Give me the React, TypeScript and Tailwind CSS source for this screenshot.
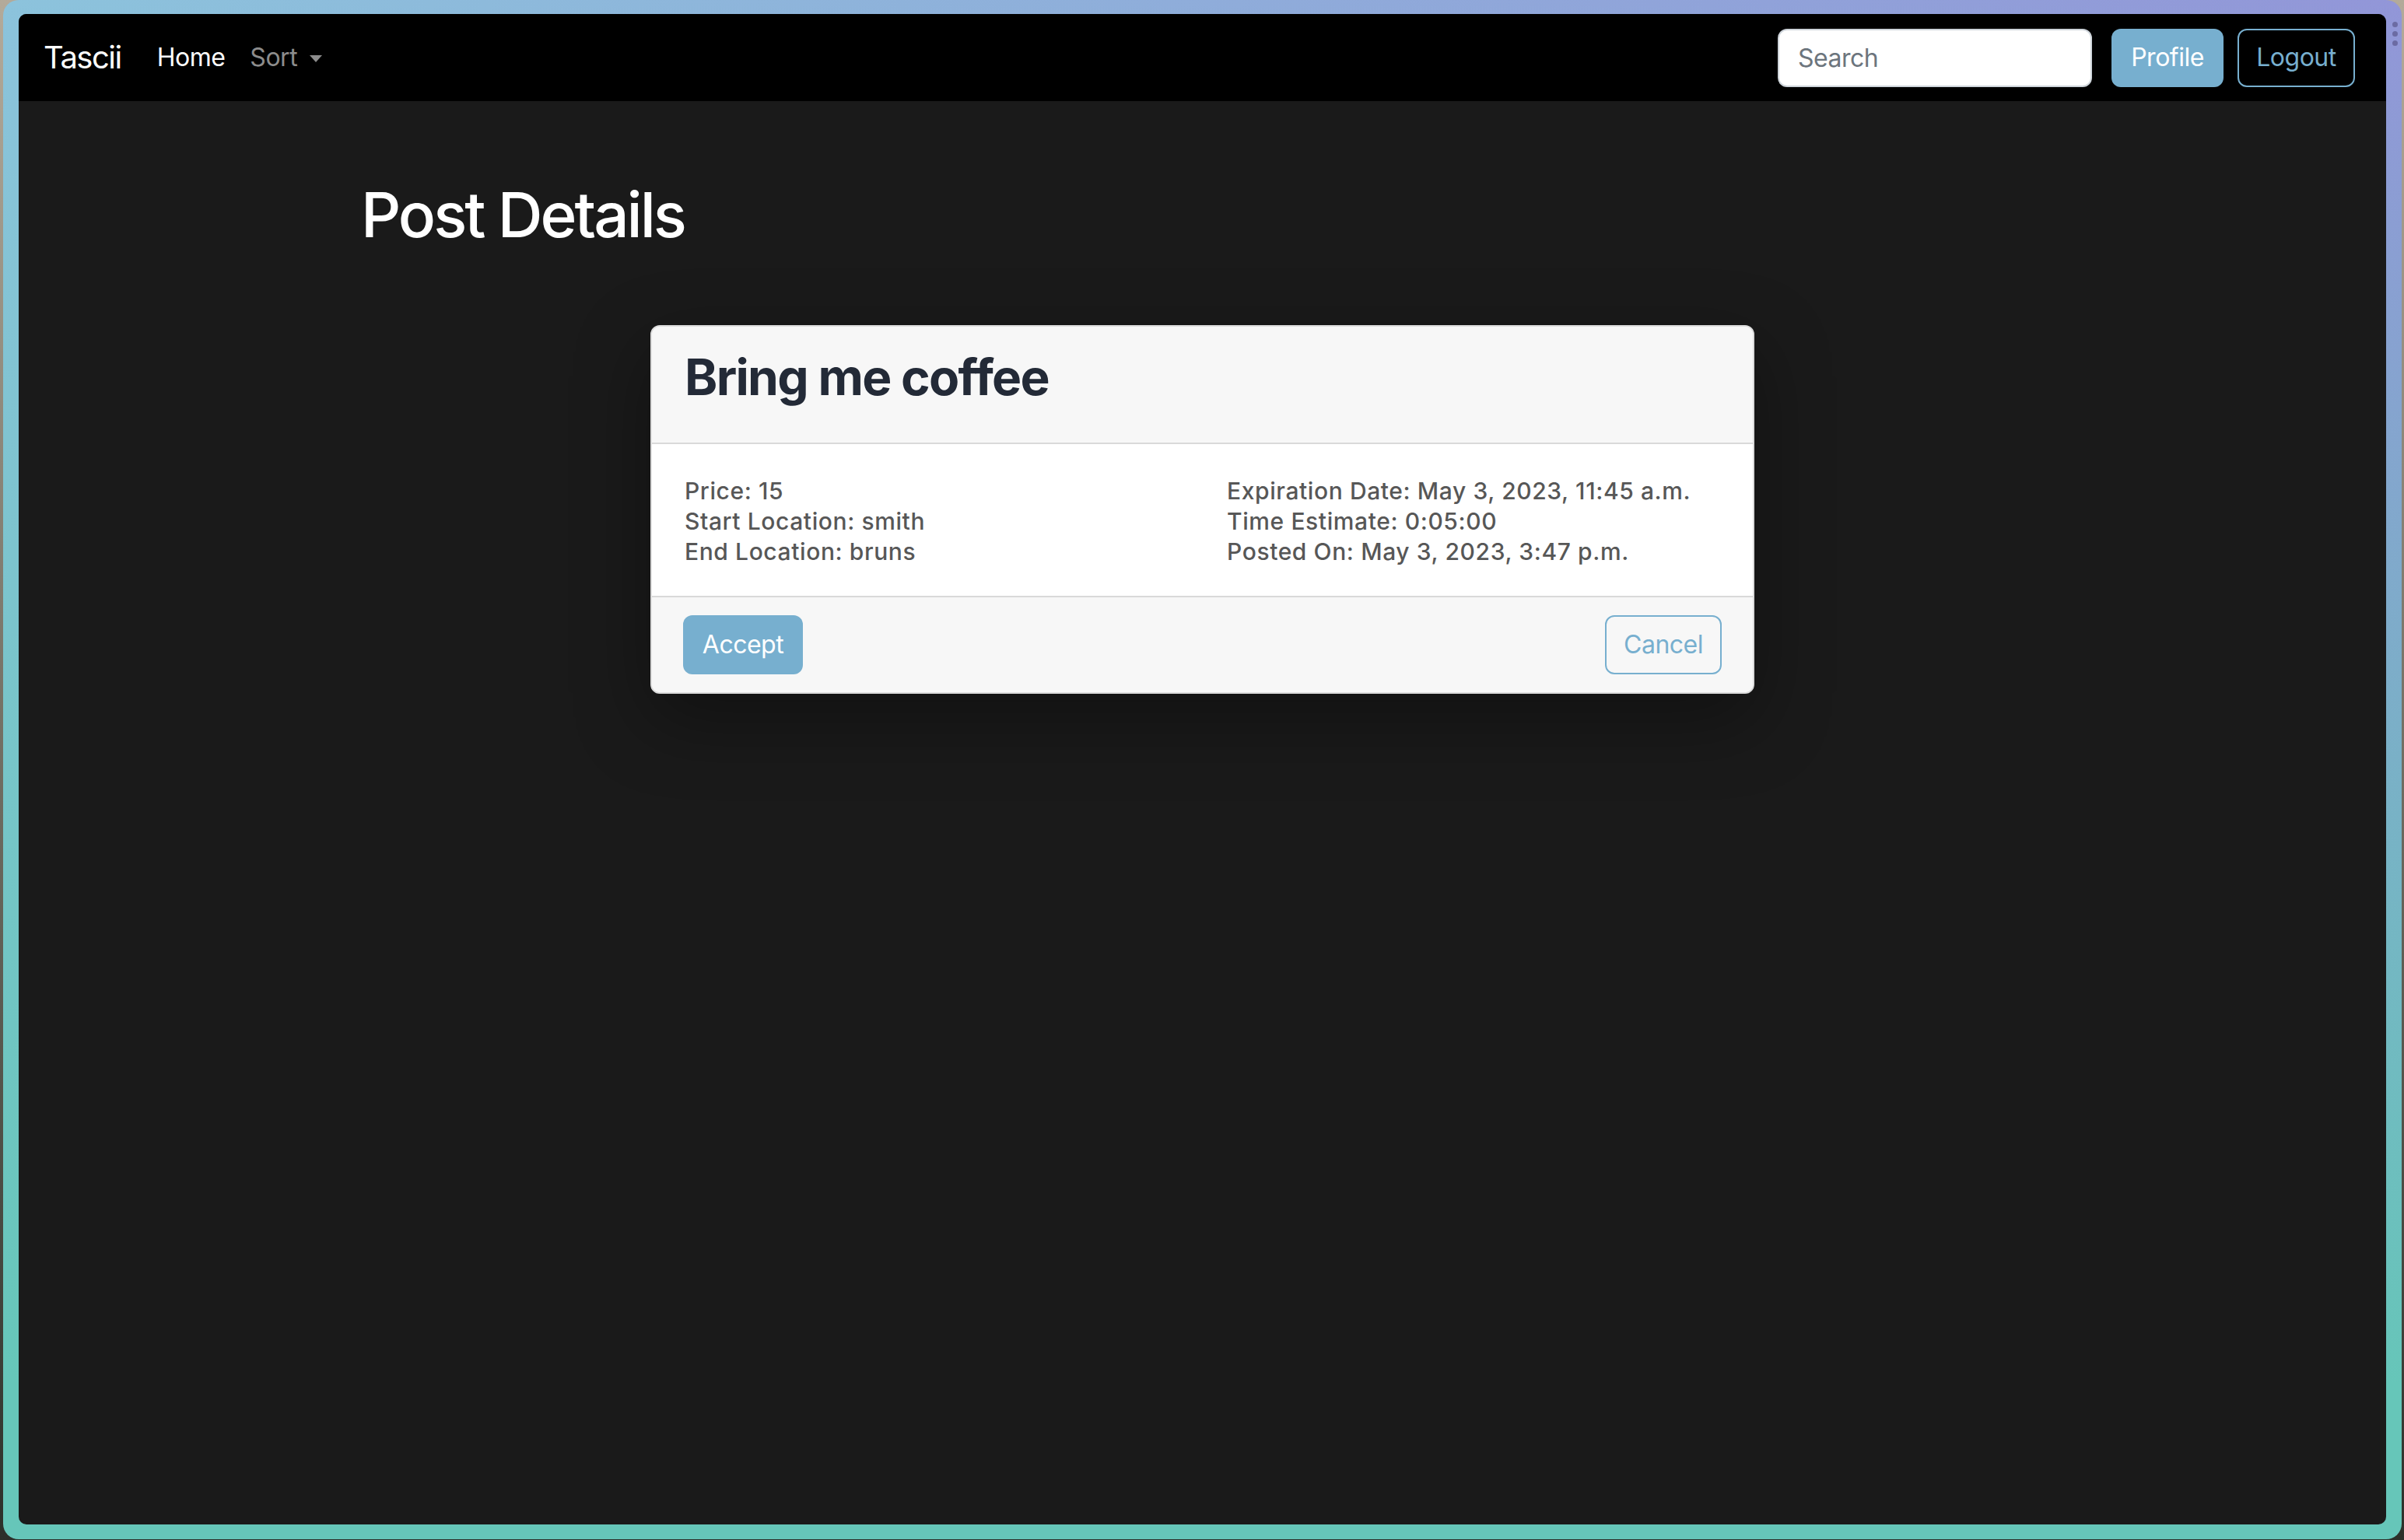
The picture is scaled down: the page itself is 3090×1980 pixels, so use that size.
import React from "react";

const Navbar: React.FC = () => {
  return (
    <nav className="flex h-[112px] shrink-0 items-center bg-black pl-[32px] pr-[40px]">
      <span className="mr-[30px] text-[40px] leading-none tracking-[-1.5px] text-white">Tascii</span>
      <a className="px-[16px] text-[32px] leading-none tracking-[-0.5px] text-white">Home</a>
      <a className="flex items-center px-[16px] text-[32px] leading-none tracking-[-0.5px] text-[#8c8c8c]">
        Sort
        <span className="ml-[16px] mt-[2px] h-0 w-0 border-x-[8px] border-t-[9px] border-x-transparent border-t-[#8c8c8c]" />
      </a>
      <div className="ml-auto flex items-center">
        <input
          placeholder="Search"
          className="h-[75px] w-[404px] rounded-[12px] border-2 border-[#ced4da] bg-white px-[24px] text-[32px] tracking-[-0.5px] text-[#212529] outline-none placeholder:text-[#6c757d]"
        />
        <button className="ml-[25px] h-[75px] w-[144px] rounded-[12px] bg-[#77afcf] text-[32px] tracking-[-0.5px] text-white">
          Profile
        </button>
        <button className="ml-[18px] h-[75px] w-[151px] rounded-[12px] border-2 border-[#77afcf] text-[32px] tracking-[-0.5px] text-[#77afcf]">
          Logout
        </button>
      </div>
    </nav>
  );
};

const PostCard: React.FC = () => {
  const left = ["Price: 15", "Start Location: smith", "End Location: bruns"];
  const right = [
    "Expiration Date: May 3, 2023, 11:45 a.m.",
    "Time Estimate: 0:05:00",
    "Posted On: May 3, 2023, 3:47 p.m.",
  ];
  return (
    <div className="mx-auto mt-[94px] w-[1419px] overflow-hidden rounded-[12px] border-2 border-[#dcdcdc] bg-white shadow-[0_32px_96px_rgba(0,0,0,0.35)]">
      <div className="border-b-2 border-[#d9d9d9] bg-[#f7f7f7] pb-[46px] pl-[42px] pt-[26px]">
        <h2 className="text-[64px] font-bold leading-[77px] tracking-[-1.7px] text-[#232a37]">Bring me coffee</h2>
      </div>
      <div className="grid grid-cols-[697px_1fr] border-b-2 border-[#d9d9d9] pb-[37px] pl-[42px] pt-[41px] text-[30px] font-medium leading-[39px] tracking-[0.6px] text-[#575757]">
        <div>
          {left.map((t) => (
            <p key={t}>{t}</p>
          ))}
        </div>
        <div>
          {right.map((t) => (
            <p key={t}>{t}</p>
          ))}
        </div>
      </div>
      <div className="flex items-center justify-between bg-[#f7f7f7] px-[40px] py-[23px]">
        <button className="h-[76px] w-[154px] rounded-[12px] bg-[#77afcf] text-[32px] tracking-[-0.5px] text-white">
          Accept
        </button>
        <button className="h-[76px] w-[150px] rounded-[12px] border-2 border-[#77afcf] text-[32px] tracking-[-0.5px] text-[#77afcf]">
          Cancel
        </button>
      </div>
    </div>
  );
};

export default function App() {
  return (
    <div className="h-[1980px] w-[3090px] bg-[linear-gradient(to_bottom,#b3aa9a,#2c302a)] pb-[1px] pl-[4px] pr-[3px] font-['Inter',sans-serif]">
      <div className="relative h-full rounded-[20px] bg-[linear-gradient(to_bottom,rgba(102,198,185,0)_0%,#66c6b9_90%),linear-gradient(to_right,#8cc3dc,#9296d8)] pb-[19px] pl-[20px] pr-[20px] pt-[18px]">
        <div className="absolute right-[5px] top-[28px] flex flex-col gap-[5px]">
          <span className="h-[7px] w-[7px] rounded-full bg-[#6b6ba3]" />
          <span className="h-[7px] w-[7px] rounded-full bg-[#6b6ba3]" />
          <span className="h-[7px] w-[7px] rounded-full bg-[#6b6ba3]" />
        </div>
        <div className="flex h-full flex-col overflow-hidden rounded-[10px] bg-[#1a1a1a]">
          <Navbar />
          <main>
            <div className="mx-auto w-[2163px]">
              <h1 className="mt-[98px] text-[80px] font-medium leading-[96px] tracking-[-3px] text-white">
                Post Details
              </h1>
            </div>
            <PostCard />
          </main>
        </div>
      </div>
    </div>
  );
}
